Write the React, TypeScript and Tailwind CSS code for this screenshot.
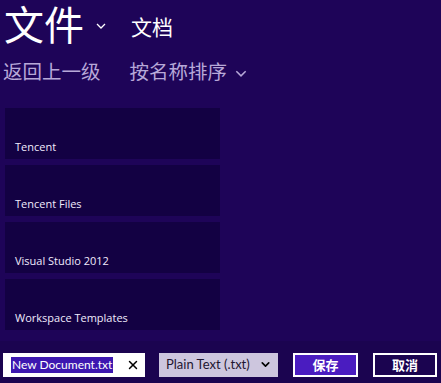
import { X, ChevronDown } from 'lucide-react';

const folders = ['Tencent', 'Tencent Files', 'Visual Studio 2012', 'Workspace Templates'];

const cjk = { fontFamily: '"Noto Sans CJK SC", "Noto Sans", sans-serif' };
const latin = { fontFamily: '"Open Sans", "Noto Sans CJK SC", sans-serif' };
const field = { fontFamily: 'Lato, "Noto Sans CJK SC", sans-serif' };

function Chevron({ className }: { className: string }) {
  return (
    <svg viewBox="0 0 10 6" className={className} fill="none" stroke="currentColor" strokeWidth="1.3">
      <path d="M1 1l4 4 4-4" />
    </svg>
  );
}

export default function App() {
  return (
    <div className="w-[441px] h-[383px] bg-[#1e0458] text-white overflow-hidden flex flex-col" style={cjk}>
      {/* 标题 */}
      <div className="flex items-center pl-[4px] pt-[1px]">
        <span className="text-[40px] leading-[1.1] font-normal">文件</span>
        <Chevron className="w-[10px] h-[6px] ml-[12px] mt-[6px] text-white" />
        <span className="text-[21px] leading-[1.3] ml-[25px] mt-[8px]">文档</span>
      </div>

      {/* 工具栏 */}
      <div className="flex items-center h-[30px] mt-[11px] pl-[3px] text-[19.5px] leading-[30px] text-[#b7a8d8]">
        <span>返回上一级</span>
        <span className="ml-[29px]">按名称排序</span>
        <Chevron className="w-[12px] h-[7px] ml-[8px] mt-[4px] text-[#b7a8d8]" />
      </div>

      {/* 文件夹 */}
      <div className="flex flex-col gap-[6px] pl-[5px] mt-[22px]">
        {folders.map((name) => (
          <div
            key={name}
            className="w-[215px] h-[51px] bg-[#130143] flex items-end pl-[10px] pb-[4px] text-[11px] text-[#f0ebfc]"
            style={latin}
          >
            {name}
          </div>
        ))}
      </div>

      {/* 底部栏 */}
      <div className="mt-auto h-[42px] bg-[#1b0450] flex items-center pt-[5px] pl-[3px] pr-[4px]">
        <div className="w-[142px] h-[24px] bg-white flex items-center pl-[8px] pr-[5px]" style={field}>
          <span className="bg-[#3d17b0] text-white text-[12px] leading-[16px] px-px">New Document.txt</span>
          <X className="w-[14px] h-[14px] ml-auto text-black" strokeWidth={2.5} />
        </div>
        <div
          className="w-[119px] h-[24px] ml-[14px] bg-[#cdc6de] flex items-center pl-[7px] pr-[6px] text-[13px] text-[#1e1530]"
          style={field}
        >
          <span>Plain Text (.txt)</span>
          <ChevronDown className="w-[13px] h-[13px] ml-auto text-black" strokeWidth={3} />
        </div>
        <button className="w-[65px] h-[24px] ml-[15px] bg-[#4a1cc0] border-2 border-white text-white text-[13px] font-bold flex items-center justify-center">
          保存
        </button>
        <button className="w-[64px] h-[24px] ml-auto bg-[#1b0450] border-2 border-white text-white text-[13px] font-bold flex items-center justify-center">
          取消
        </button>
      </div>
    </div>
  );
}
